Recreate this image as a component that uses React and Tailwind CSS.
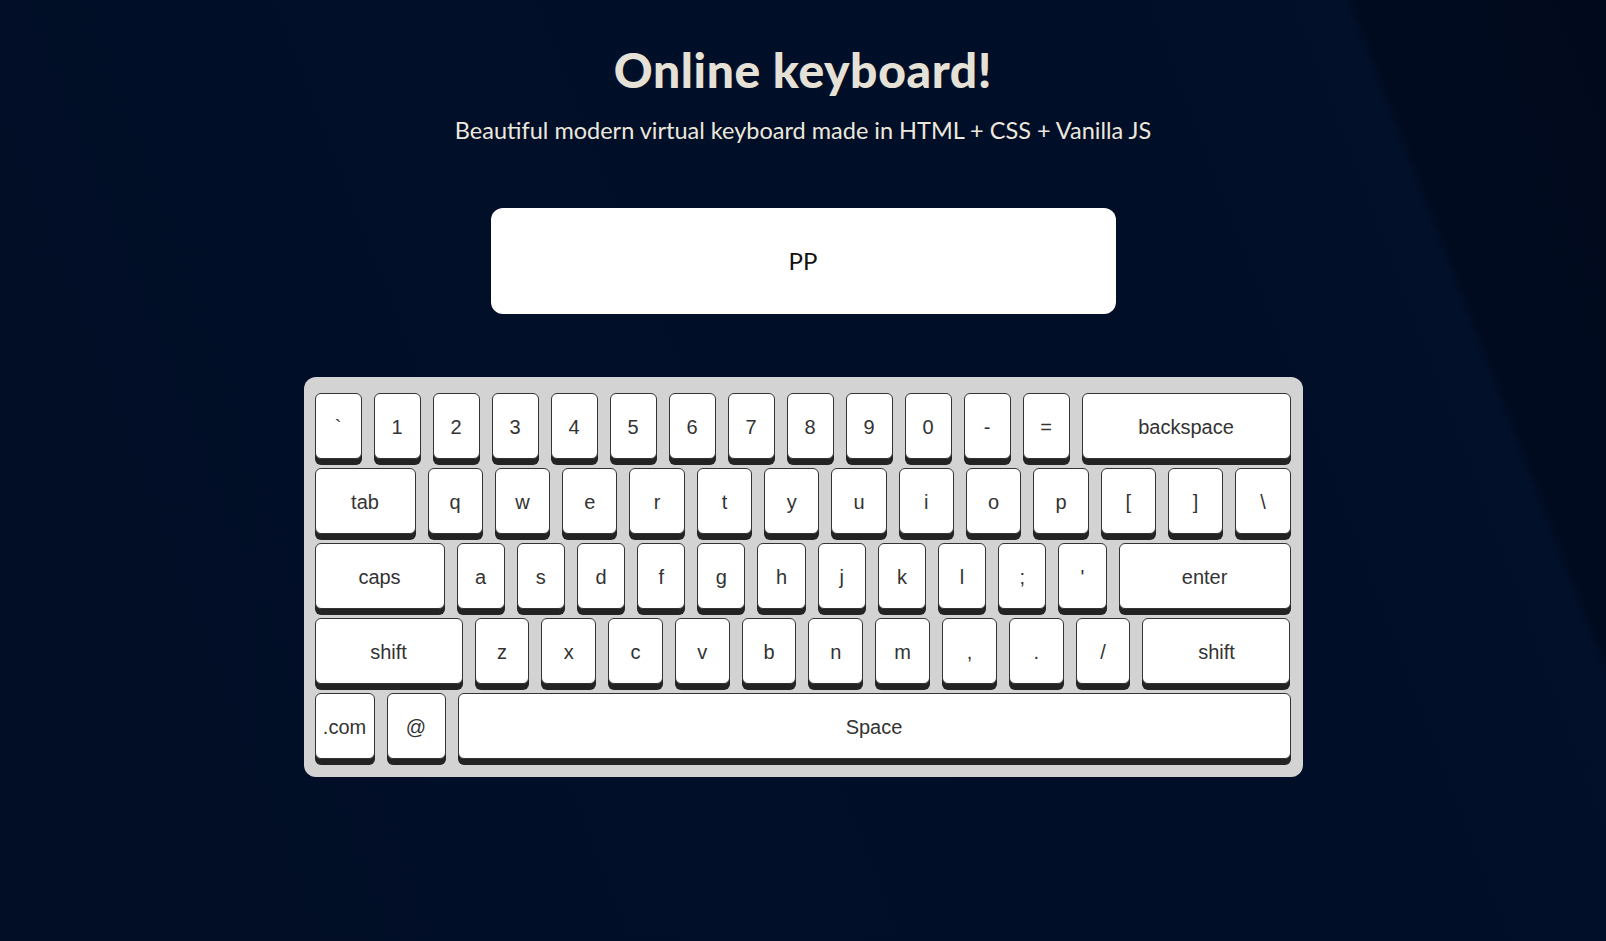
import React from "react";

const rows = [
  [
    ..."`1234567890-=".split("").map((k) => ({ label: k })),
    { label: "backspace", w: "w-[209px] shrink-0" },
  ],
  [
    { label: "tab", w: "w-[101px] shrink-0" },
    ..."qwertyuiop[]\\".split("").map((k) => ({ label: k })),
  ],
  [
    { label: "caps", w: "w-[130px] shrink-0" },
    ..."asdfghjkl;'".split("").map((k) => ({ label: k })),
    { label: "enter", w: "w-[172px] shrink-0" },
  ],
  [
    { label: "shift", w: "w-[148px] shrink-0" },
    ..."zxcvbnm,./".split("").map((k) => ({ label: k })),
    { label: "shift", w: "w-[148px] shrink-0" },
  ],
  [
    { label: ".com", w: "w-[60px] shrink-0" },
    { label: "@", w: "w-[59px] shrink-0" },
    { label: "Space" },
  ],
];

function Key({ label, w }) {
  return (
    <div
      className={`${w ? w : "flex-1 min-w-0"} flex h-[66px] items-center justify-center rounded-[6px] border border-[#343434] bg-white pt-[1px] text-[20px] text-[#333] shadow-[0_6px_0_#232323]`}
      style={{ fontFamily: '"Liberation Sans", Arial, sans-serif' }}
    >
      {label}
    </div>
  );
}

export default function App() {
  return (
    <div
      className="min-h-[941px] w-full bg-[linear-gradient(69deg,#010e26_0%,#020f28_40%,#010e27_70%,#02102a_86.6%,#010b1f_87.2%,#010a1d_100%)]"
      style={{ fontFamily: 'Lato, "Noto Sans", sans-serif' }}
    >
      <div className="flex flex-col items-center pt-[36px]">
        <h1 className="text-[48px] font-black leading-[68px] text-[#e6e1d6] tracking-[0.6px]">
          Online keyboard!
        </h1>
        <p className="mt-[11px] text-[23.5px] leading-[30px] text-[#ece8de]">
          Beautiful modern virtual keyboard made in HTML + CSS + Vanilla JS
        </p>
        <div className="mt-[63px] flex h-[106px] w-[625px] items-center justify-center rounded-[12px] bg-white text-[24px] text-[#111]">
          PP
        </div>
        <div className="mt-[63px] flex w-[999px] flex-col gap-[9px] rounded-[12px] bg-[#d3d3d3] pb-[18px] pl-[11px] pr-[12px] pt-[16px]">
          {rows.map((row, i) => (
            <div key={i} className="flex gap-[12px]">
              {row.map((k, j) => (
                <Key key={j} label={k.label} w={k.w} />
              ))}
            </div>
          ))}
        </div>
      </div>
    </div>
  );
}
